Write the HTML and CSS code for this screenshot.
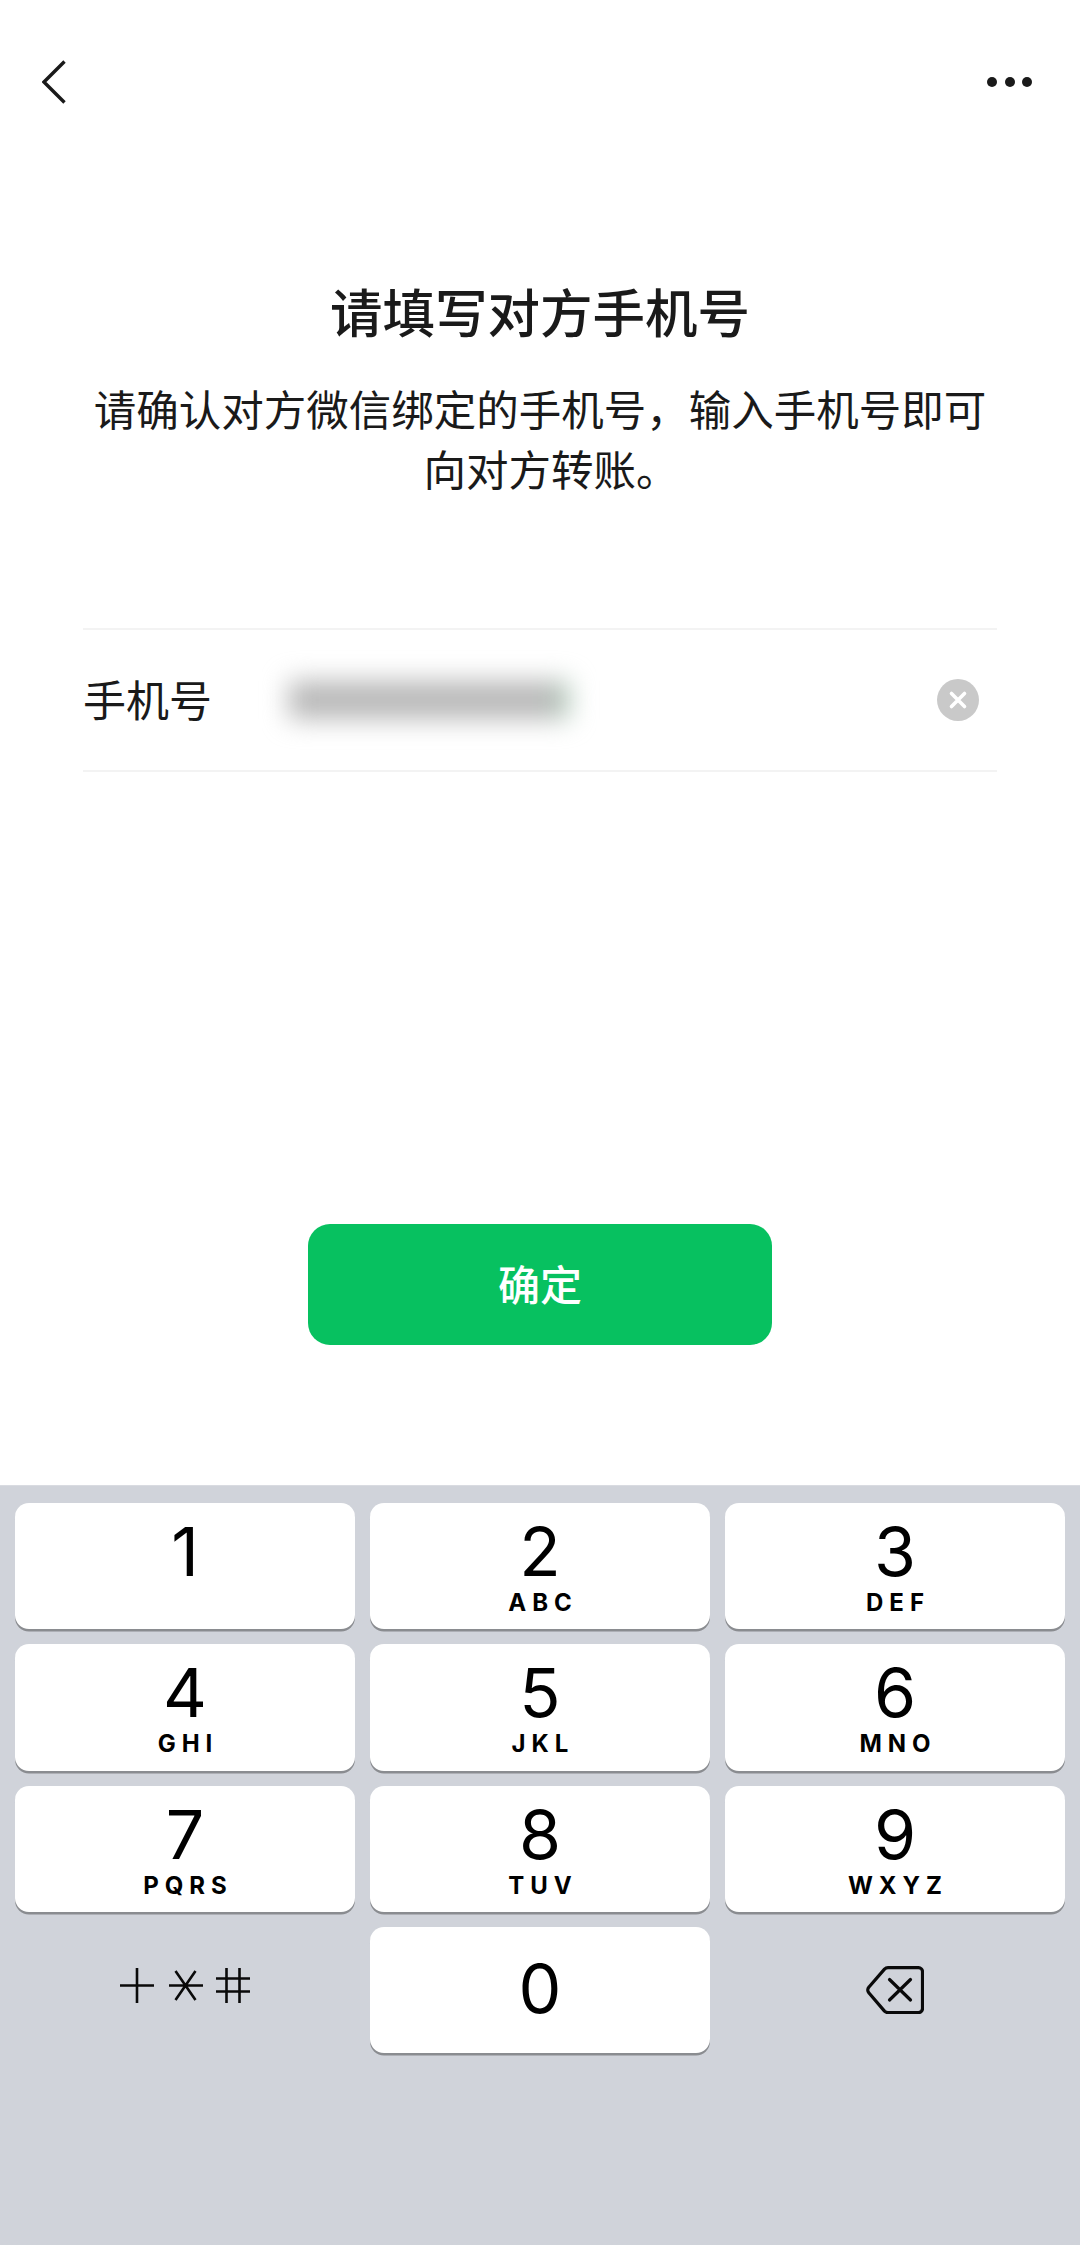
FILE: index.html
```html
<!DOCTYPE html>
<html lang="zh-CN">
<head>
<meta charset="utf-8">
<title>请填写对方手机号</title>
<link rel="stylesheet" href="styles.css">
</head>
<body>
<main class="page">
  <header class="nav">
    <svg class="back" width="24" height="44" viewBox="0 0 24 44" aria-label="返回"><path d="M22.500 1.500 2 22l20.500 20.500" fill="none" stroke="#1a1a1a" stroke-width="3.400"/></svg>
    <div class="more" aria-label="更多"><i></i><i></i><i></i></div>
  </header>
  <section class="intro">
    <h1 class="title">请填写对方手机号</h1>
    <p class="desc">请确认对方微信绑定的手机号，输入手机号即可<br><span class="desc-tail">向对方转账。</span></p>
  </section>
  <section class="field">
    <span class="label">手机号</span>
    <span class="masked"></span>
    <svg class="clear" width="42" height="42" viewBox="0 0 42 42" aria-label="清除"><circle cx="21" cy="21" r="21" fill="#c9c9c9"/><path d="M14.500 14.500l13 13m0-13-13 13" stroke="#fff" stroke-width="3.600" stroke-linecap="round"/></svg>
  </section>
  <div class="action"><button class="confirm">确定</button></div>
  <section class="keyboard">
    <div class="key"><b>1</b></div>
    <div class="key"><b>2</b><small>ABC</small></div>
    <div class="key"><b>3</b><small>DEF</small></div>
    <div class="key"><b>4</b><small>GHI</small></div>
    <div class="key"><b>5</b><small>JKL</small></div>
    <div class="key"><b>6</b><small>MNO</small></div>
    <div class="key"><b>7</b><small>PQRS</small></div>
    <div class="key"><b>8</b><small>TUV</small></div>
    <div class="key"><b>9</b><small>WXYZ</small></div>
    <div class="key plain sym">
      <svg width="130" height="36" viewBox="0 0 130 36" aria-label="+*#" fill="none" stroke="#0a0a0a" stroke-width="2.600">
        <path d="M0 17.500h34M17 0v35"/>
        <path d="M49 17.500h34M55.500 3l20 29m0-29-20 29"/>
        <path d="M96 10.500h34M96 23.500h34M106.500 0v35M119.500 0v35"/>
      </svg>
    </div>
    <div class="key zero"><b>0</b></div>
    <div class="key plain">
      <svg width="58" height="48" viewBox="0 0 58 48" aria-label="删除" fill="none" stroke="#0a0a0a" stroke-width="3.200" stroke-linejoin="round" stroke-linecap="round">
        <path d="M22 1.600h30.500a4 4 0 0 1 4 4v37a4 4 0 0 1-4 4H22a5 5 0 0 1-3.500-1.500L3 27a4.200 4.200 0 0 1 0-6L18.500 3.100A5 5 0 0 1 22 1.600z"/>
        <path d="M23.500 13.500l21 20.500m0-20.500-21 20.500"/>
      </svg>
    </div>
  </section>
</main>
</body>
</html>
```
FILE: styles.css
```css
* { box-sizing: border-box; margin: 0; padding: 0; }
html, body { width: 1080px; height: 2245px; background: #fff; overflow: hidden; }
body { font-family: "Noto Sans CJK SC", "Liberation Sans", sans-serif; color: #1a1a1a; }
.page { width: 1080px; height: 2245px; display: flex; flex-direction: column; }
.nav { height: 164px; padding: 0 48px 0 42px; display: flex; justify-content: space-between; align-items: center; flex: none; }
.back { display: block; }
.more { display: flex; gap: 7.500px; }
.more i { width: 10px; height: 10px; border-radius: 50%; background: #1a1a1a; display: block; }
.intro { text-align: center; padding-top: 110px; flex: none; }
.title { font-size: 52.500px; font-weight: 500; line-height: 72px; }
.desc { font-size: 42.500px; font-weight: 400; line-height: 60px; margin-top: 32px; }
.desc-tail { margin-left: 22px; }
.field { margin: 0 83px; height: 144px; margin-top: 130px; border-top: 2px solid #f3f3f3; border-bottom: 2px solid #f3f3f3; display: flex; align-items: center; padding-right: 18px; flex: none; }
.label { font-size: 43px; width: 206px; flex: none; margin-top: -4px; }
.masked { width: 280px; height: 38px; background: linear-gradient(90deg, #b8b8b8 0 92%, #a9c9b4 100%); filter: blur(13px); flex: none; }
.clear { margin-left: auto; display: block; }
.action { display: flex; justify-content: center; margin-top: 452px; flex: none; }
.confirm { width: 464px; height: 121px; border: 0; border-radius: 22px; background: #07c160; color: #fff; font: 500 42px "Noto Sans CJK SC", sans-serif; padding-bottom: 4px; }
.keyboard { margin-top: auto; height: 760px; background: #d0d3da; border-top: 1px solid #d9dbe1; padding: 17px 15px 0; display: grid; grid-template-columns: repeat(3, 340px); grid-auto-rows: 126.330px; gap: 15px; align-content: start; }
.key { background: #fff; border-radius: 14px; box-shadow: 0 2.500px 0 #8a8c90; display: flex; flex-direction: column; align-items: center; font-family: Inter, "Liberation Sans", sans-serif; color: #000; }
.key b { font-weight: 400; font-size: 68px; line-height: 60px; margin-top: 18px; }
.key small { font-size: 24px; font-weight: 700; letter-spacing: 6px; margin-right: -6px; line-height: 28px; margin-top: 8px; }
.key.plain { background: transparent; box-shadow: none; justify-content: center; }
.key.sym { padding-bottom: 8px; }
.key.zero { justify-content: center; padding-bottom: 4px; }
.key.zero b { margin-top: 0; }
```
